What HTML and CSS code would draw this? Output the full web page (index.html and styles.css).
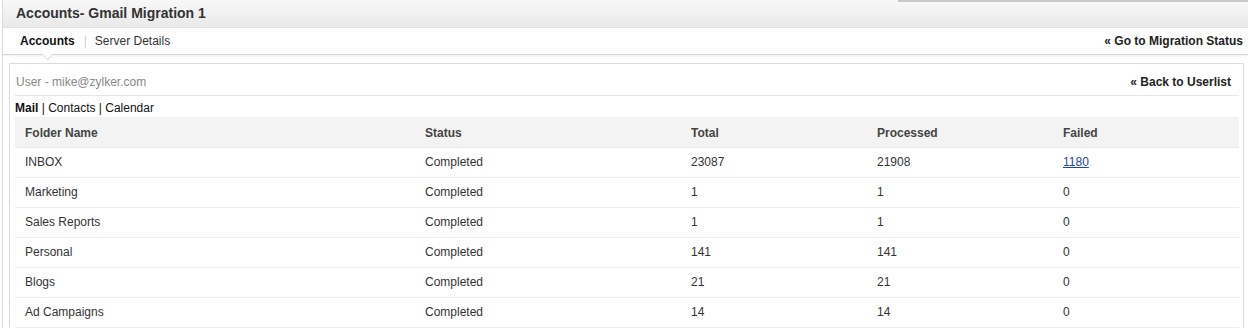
FILE: index.html
```html
<!DOCTYPE html>
<html lang="en">
<head>
    <meta charset="UTF-8">
    <title>Accounts- Gmail Migration 1</title>
    <link rel="stylesheet" href="styles.css">
</head>
<body>
    <div class="page">
        <div class="title-bar">Accounts- Gmail Migration 1</div>

        <div class="tab-bar">
            <div class="tabs">
                <span class="tab active">Accounts</span>
                <span class="tab-sep">|</span>
                <span class="tab">Server Details</span>
            </div>
            <a class="nav-link">« Go to Migration Status</a>
        </div>

        <div class="panel">
            <div class="user-row">
                <span class="user">User - mike@zylker.com</span>
                <a class="nav-link">« Back to Userlist</a>
            </div>
            <div class="sub-tabs"><b>Mail</b> | Contacts | Calendar</div>

            <table class="folders">
                <thead>
                    <tr>
                        <th class="c1">Folder Name</th>
                        <th class="c2">Status</th>
                        <th class="c3">Total</th>
                        <th class="c4">Processed</th>
                        <th>Failed</th>
                    </tr>
                </thead>
                <tbody>
                    <tr><td>INBOX</td><td>Completed</td><td>23087</td><td>21908</td><td><a class="fail-link">1180</a></td></tr>
                    <tr><td>Marketing</td><td>Completed</td><td>1</td><td>1</td><td>0</td></tr>
                    <tr><td>Sales Reports</td><td>Completed</td><td>1</td><td>1</td><td>0</td></tr>
                    <tr><td>Personal</td><td>Completed</td><td>141</td><td>141</td><td>0</td></tr>
                    <tr><td>Blogs</td><td>Completed</td><td>21</td><td>21</td><td>0</td></tr>
                    <tr><td>Ad Campaigns</td><td>Completed</td><td>14</td><td>14</td><td>0</td></tr>
                </tbody>
            </table>
        </div>
    </div>
</body>
</html>
```

FILE: styles.css
```css
* {
    margin: 0;
    padding: 0;
    box-sizing: border-box;
}
body {
    font-family: "Liberation Sans", Arial, sans-serif;
    font-size: 12px;
    color: #333;
    background: #fff;
}
.page {
    border-left: 1px solid #dcdcdc;
    margin-left: 2px;
    min-height: 328px;
}
.title-bar {
    position: relative;
    height: 28px;
    padding: 5px 0 0 13px;
    font-size: 14px;
    font-weight: bold;
    color: #333;
    background: linear-gradient(#f8f8f8, #e9e9e9);
    border-bottom: 1px solid #dde3e6;
}
.title-bar::after {
    content: "";
    position: absolute;
    top: 0;
    left: 895px;
    right: 0;
    height: 2px;
    background: #c9c9c9;
}
.tab-bar {
    position: relative;
    display: flex;
    justify-content: space-between;
    align-items: center;
    height: 27px;
    padding: 0 5px 0 17px;
    background: #fff;
    border-bottom: 1px solid #d4d4d4;
    box-shadow: 0 1px 2px rgba(0, 0, 0, 0.06);
}
.tab-bar::after {
    content: "";
    position: absolute;
    left: 39px;
    bottom: -6px;
    width: 10px;
    height: 10px;
    background: #fff;
    border-right: 1px solid #d4d4d4;
    border-bottom: 1px solid #d4d4d4;
    transform: rotate(45deg) scale(0.7, 0.7);
}
.tabs {
    display: flex;
    align-items: center;
}
.tab {
    color: #333;
}
.tab.active {
    font-weight: bold;
    color: #111;
}
.tab-sep {
    color: #ccc;
    margin: 0 8px 0 9px;
}
.nav-link {
    font-weight: bold;
    color: #222;
    text-decoration: none;
}
.panel {
    margin: 8px 4px 0 6px;
    padding: 0 4px 0 5px;
    border: 1px solid #dcdcdc;
    border-bottom: none;
}
.user-row {
    display: flex;
    justify-content: space-between;
    align-items: center;
    height: 32px;
    padding: 5px 8px 0 1px;
    border-bottom: 1px solid #e6e6e6;
}
.user {
    color: #888;
}
.sub-tabs {
    height: 21px;
    padding-top: 5px;
    color: #111;
}
.folders {
    width: 100%;
    border-collapse: collapse;
    table-layout: fixed;
}
.folders th,
.folders td {
    height: 30px;
    padding: 0 10px;
    text-align: left;
    border-bottom: 1px solid #eeeeee;
}
.folders th {
    padding-top: 3px;
    background: #f3f3f3;
    font-weight: bold;
    color: #444;
    border-bottom-color: #e8e8e8;
}
.folders td {
    color: #333;
}
.c1 { width: 400px; }
.c2 { width: 266px; }
.c3 { width: 186px; }
.c4 { width: 186px; }
.fail-link {
    color: #2545a8;
    text-decoration: underline;
}
```
